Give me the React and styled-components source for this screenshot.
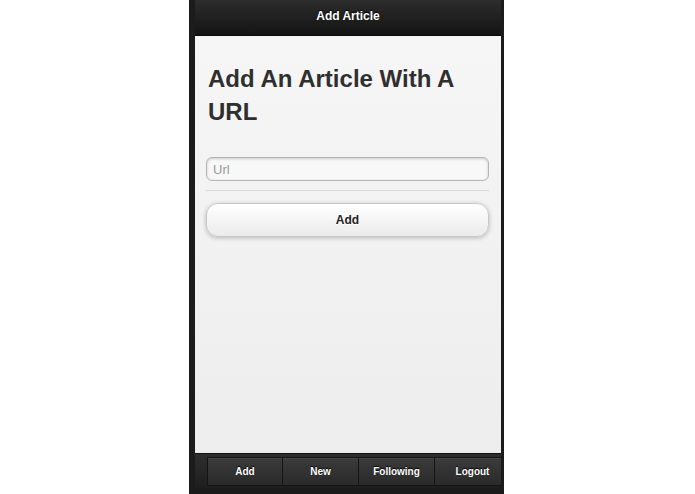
import React from "react";
import styled, { createGlobalStyle } from "styled-components";

const Global = createGlobalStyle`
  html, body { margin: 0; padding: 0; background: #ffffff; }
  body { font-family: "Liberation Sans", Arial, Helvetica, sans-serif; }
  * { box-sizing: border-box; }
`;

const Page = styled.div`
  width: 695px;
  height: 494px;
  display: flex;
  padding-left: 189px;
`;

const Device = styled.div`
  width: 315px;
  height: 494px;
  background: #1b1b1b;
  padding: 0 3px 6px 6px;
  display: flex;
  flex-direction: column;
`;

const Header = styled.header`
  height: 36px;
  flex-shrink: 0;
  background: linear-gradient(#2c2c2c, #141414);
  border-bottom: 1px solid #0a0a0a;
  display: flex;
  align-items: center;
  justify-content: center;
  color: #fff;
  font-weight: bold;
  font-size: 12px;
  text-shadow: 0 -1px 1px #000;
  padding-bottom: 3px;
`;

const Content = styled.main`
  flex: 1;
  background: linear-gradient(#f6f6f6, #ededed);
  padding: 26px 12px 0 11px;
  display: flex;
  flex-direction: column;
`;

const Title = styled.h1`
  margin: 0 0 29px 2px;
  font-size: 24px;
  line-height: 33px;
  font-weight: bold;
  color: #2f2f2f;
`;

const UrlInput = styled.input`
  height: 24px;
  width: 100%;
  border: 1px solid #b4b4b4;
  border-radius: 6px;
  background: #f8f8f8;
  box-shadow: inset 0 1px 3px rgba(0, 0, 0, 0.18);
  padding: 0 6px;
  font-family: inherit;
  font-size: 13px;
  color: #333;
  outline: none;
  &::placeholder { color: #9a9a9a; }
`;

const Divider = styled.hr`
  margin: 9px 0 12px;
  border: 0;
  border-top: 1px solid #d8d8d8;
  height: 0;
`;

const AddButton = styled.button`
  height: 34px;
  width: 100%;
  border: 1px solid #c8c8c8;
  border-radius: 12px;
  background: linear-gradient(#ffffff, #ebebeb);
  box-shadow: 0 1px 4px rgba(0, 0, 0, 0.25);
  font-family: inherit;
  font-weight: bold;
  font-size: 12px;
  color: #222;
  text-shadow: 0 1px 0 #fff;
  padding: 0;
`;

const Footer = styled.nav`
  height: 35px;
  flex-shrink: 0;
  background: linear-gradient(#2e2e2e, #1e1e1e);
  border-top: 1px solid #111;
  padding: 3px 0 2px 12px;
  display: flex;
  overflow: hidden;
`;

const NavButton = styled.div`
  width: 76px;
  flex-shrink: 0;
  height: 29px;
  background: linear-gradient(#3b3b3b, #2a2a2a);
  border: 1px solid #141414;
  border-left-width: ${(p) => (p.$first ? "1px" : "0")};
  box-shadow: inset 0 1px 0 rgba(255, 255, 255, 0.08);
  display: flex;
  align-items: center;
  justify-content: center;
  color: #fff;
  font-weight: bold;
  font-size: 10px;
  text-shadow: 0 -1px 1px #000;
`;

export default function App() {
  return (
    <>
      <Global />
      <Page>
        <Device>
          <Header>Add Article</Header>
          <Content>
            <Title>Add An Article With A URL</Title>
            <UrlInput placeholder="Url" />
            <Divider />
            <AddButton>Add</AddButton>
          </Content>
          <Footer>
            {["Add", "New", "Following", "Logout"].map((t, i) => (
              <NavButton key={t} $first={i === 0}>
                {t}
              </NavButton>
            ))}
          </Footer>
        </Device>
      </Page>
    </>
  );
}
